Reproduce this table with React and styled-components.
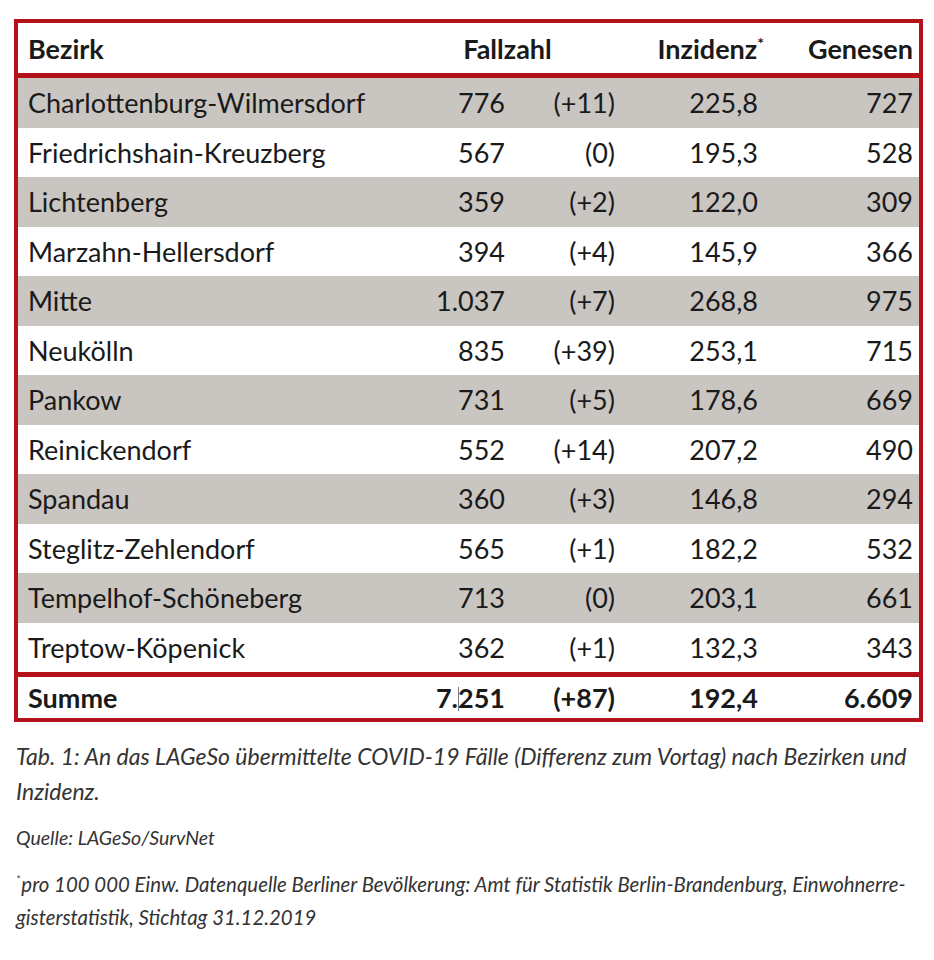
import React from 'react';
import styled, {createGlobalStyle} from 'styled-components';

const GlobalStyle = createGlobalStyle`
    body {
        margin: 0;
        background: #ffffff;
        font-family: Lato, "Open Sans", sans-serif;
        color: #1a1a1a;
    }
`;

const Page = styled.div`
    width: 934px;
    height: 960px;
    padding: 19px 0 0 14px;
    box-sizing: border-box;
`;

const Table = styled.div`
    width: 909px;
    box-sizing: border-box;
    border: 4px solid #b3121a;
`;

const Row = styled.div`
    display: grid;
    grid-template-columns: 372px 105px 110px 143px 155px;
    align-items: center;
    height: ${props => props.height || 49.5}px;
    padding: 0 6px 0 10px;
    box-sizing: border-box;
    background: ${props => (props.shaded ? '#c9c5c1' : '#ffffff')};
    font-size: 27px;
    font-weight: ${props => (props.bold ? 700 : 400)};
    border-bottom: ${props => (props.divider ? '5px solid #b3121a' : 'none')};
    border-top: ${props => (props.topLine ? '5px solid #b3121a' : 'none')};
`;

const Cell = styled.div`
    text-align: ${props => props.align || 'right'};
    white-space: nowrap;
    grid-column: ${props => props.span || 'auto'};
    line-height: 1;
`;

const Star = styled.sup`
    font-size: 16px;
    line-height: 0;
    margin-right: -6px;
    vertical-align: 10px;
`;

const Caret = styled.span`
    display: inline-block;
    width: 1px;
    height: 24px;
    background: #777;
    vertical-align: -3px;
    margin: 0 -1px 0 0;
`;

const Caption = styled.p`
    margin: ${props => props.top || 0}px 0 0 2px;
    width: 910px;
    font-style: italic;
    font-size: ${props => props.size || 23}px;
    line-height: ${props => props.lh || 35}px;
    color: #333;
`;

const FootStar = styled.sup`
    font-size: 11px;
    line-height: 0;
    vertical-align: 8px;
    margin-right: 1px;
`;

const districts = [
    ['Charlottenburg-Wilmersdorf', '776', '(+11)', '225,8', '727'],
    ['Friedrichshain-Kreuzberg', '567', '(0)', '195,3', '528'],
    ['Lichtenberg', '359', '(+2)', '122,0', '309'],
    ['Marzahn-Hellersdorf', '394', '(+4)', '145,9', '366'],
    ['Mitte', '1.037', '(+7)', '268,8', '975'],
    ['Neukölln', '835', '(+39)', '253,1', '715'],
    ['Pankow', '731', '(+5)', '178,6', '669'],
    ['Reinickendorf', '552', '(+14)', '207,2', '490'],
    ['Spandau', '360', '(+3)', '146,8', '294'],
    ['Steglitz-Zehlendorf', '565', '(+1)', '182,2', '532'],
    ['Tempelhof-Schöneberg', '713', '(0)', '203,1', '661'],
    ['Treptow-Köpenick', '362', '(+1)', '132,3', '343'],
];

export default function App() {
    return (
        <Page>
            <GlobalStyle/>
            <Table>
                <Row bold height={55} divider>
                    <Cell align="left">Bezirk</Cell>
                    <Cell align="center" span="span 2">Fallzahl</Cell>
                    <Cell>Inzidenz<Star>*</Star></Cell>
                    <Cell>Genesen</Cell>
                </Row>
                {districts.map((d, i) => (
                    <Row key={d[0]} shaded={i % 2 === 0}>
                        <Cell align="left">{d[0]}</Cell>
                        <Cell>{d[1]}</Cell>
                        <Cell>{d[2]}</Cell>
                        <Cell>{d[3]}</Cell>
                        <Cell>{d[4]}</Cell>
                    </Row>
                ))}
                <Row bold height={46} topLine>
                    <Cell align="left">Summe</Cell>
                    <Cell>7.<Caret/>251</Cell>
                    <Cell>(+87)</Cell>
                    <Cell>192,4</Cell>
                    <Cell>6.609</Cell>
                </Row>
            </Table>
            <Caption top={17}>
                Tab. 1: An das LAGeSo übermittelte COVID-19 Fälle (Differenz zum Vortag) nach Bezirken und<br/>Inzidenz.
            </Caption>
            <Caption top={14} size={19.5} lh={30}>Quelle: LAGeSo/SurvNet</Caption>
            <Caption top={15} size={20.4} lh={33}>
                <FootStar>*</FootStar>pro 100 000 Einw. Datenquelle Berliner Bevölkerung: Amt für Statistik Berlin-Brandenburg, Einwohnerre-<br/>gisterstatistik, Stichtag 31.12.2019
            </Caption>
        </Page>
    );
}
